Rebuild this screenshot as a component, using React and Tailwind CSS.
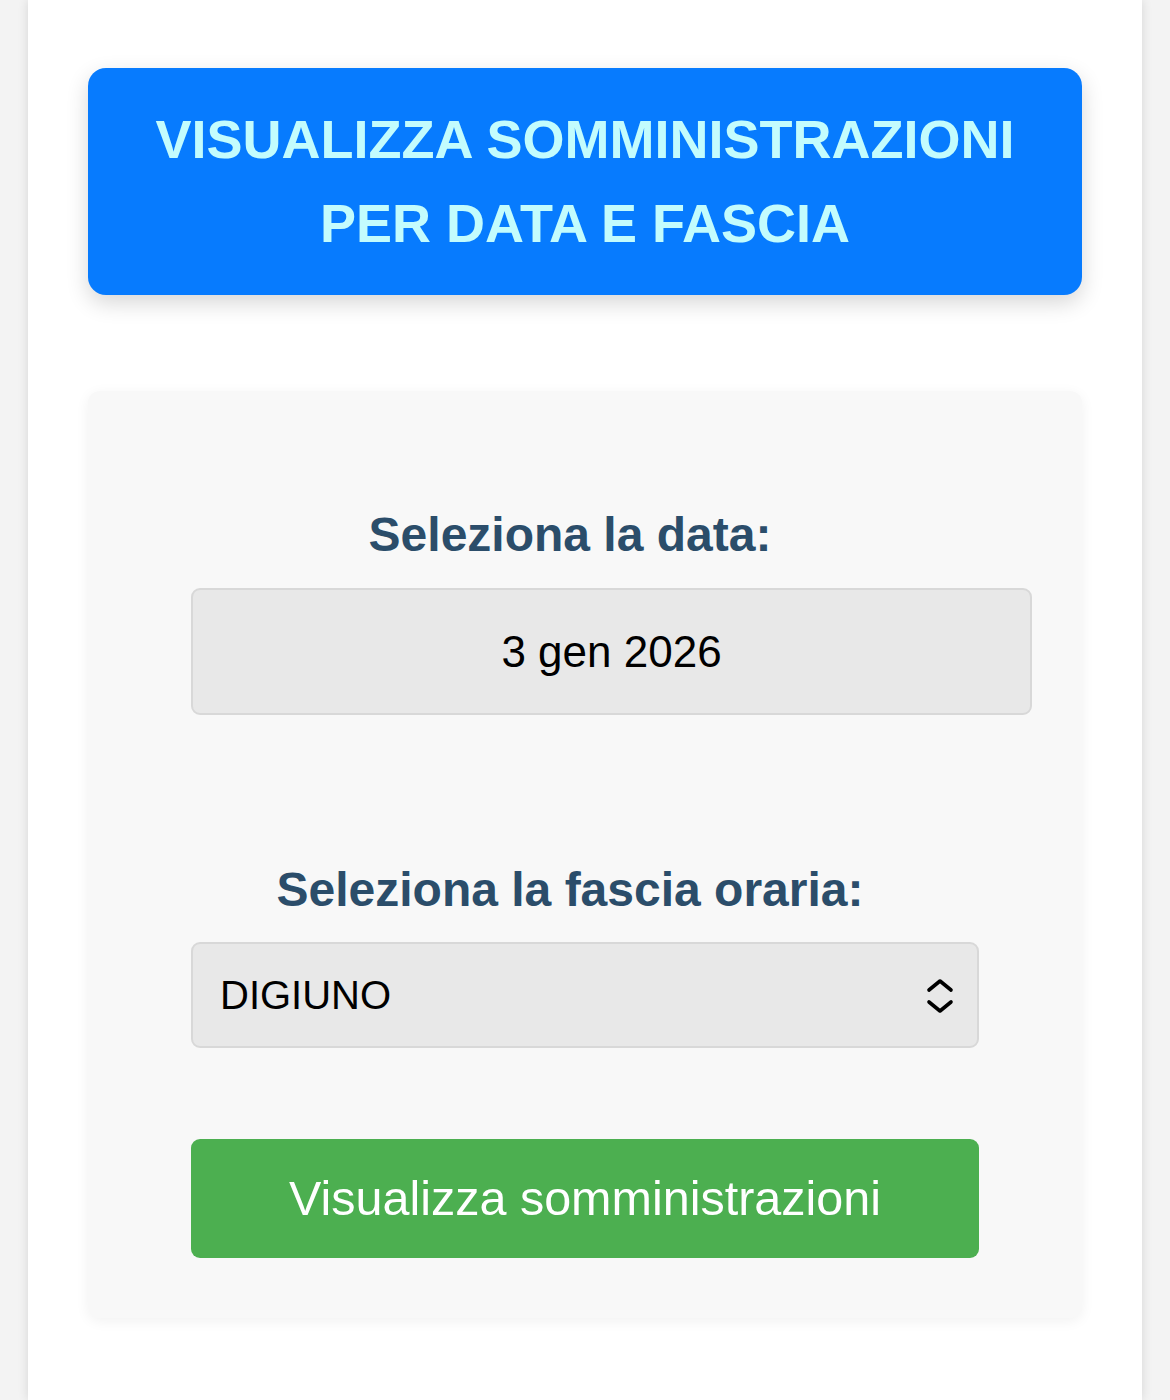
import React, { useState } from "react";

const ChevronUpDown = () => (
  <svg
    width="28"
    height="36"
    viewBox="0 0 28 36"
    fill="none"
    stroke="#000"
    strokeWidth="3.6"
    strokeLinecap="round"
    strokeLinejoin="round"
  >
    <path d="M3 12 L14 3 L25 12" />
    <path d="M3 24 L14 33 L25 24" />
  </svg>
);

const App = () => {
  const [date, setDate] = useState("3 gen 2026");
  const [fascia, setFascia] = useState("DIGIUNO");

  return (
    <div
      className="min-h-[1400px] bg-[#f3f3f3] px-[28px]"
      style={{ fontFamily: '"Liberation Sans", Arial, sans-serif' }}
    >
      <div className="min-h-[1400px] bg-white px-[60px] pt-[68px] pb-[82px] shadow-[0_0_10px_rgba(0,0,0,0.12)]">
        {/* Titolo */}
        <div className="rounded-[18px] bg-[#077bfe] pt-[29px] pb-[30px] text-center shadow-[0_8px_22px_rgba(0,0,0,0.16)]">
          <h1 className="text-[54px] font-bold uppercase leading-[84px] text-[#c3fcfd]">
            Visualizza somministrazioni
            <br />
            per data e fascia
          </h1>
        </div>

        {/* Form */}
        <div className="mt-[96px] rounded-[12px] bg-[#f8f8f8] px-[103px] pt-[116px] pb-[60px] shadow-[0_3px_14px_rgba(0,0,0,0.06)]">
          <label className="block pr-[30px] text-center text-[48px] font-bold leading-[55px] text-[#2b4d6a]">
            Seleziona la data:
          </label>
          <input
            type="text"
            readOnly
            value={date}
            onChange={(e) => setDate(e.target.value)}
            className="mt-[26px] block h-[127px] w-[841px] rounded-[9px] border-2 border-[#d8d8d8] bg-[#e8e8e8] text-center text-[44px] text-black outline-none"
          />

          <label className="mt-[147px] block pr-[30px] text-center text-[48px] font-bold leading-[55px] text-[#2b4d6a]">
            Seleziona la fascia oraria:
          </label>
          <div className="relative mt-[25px]">
            <select
              value={fascia}
              onChange={(e) => setFascia(e.target.value)}
              className="block h-[106px] w-full appearance-none rounded-[9px] border-2 border-[#d8d8d8] bg-[#e8e8e8] pl-[27px] text-[40px] text-black outline-none"
            >
              <option value="DIGIUNO">DIGIUNO</option>
              <option value="COLAZIONE">COLAZIONE</option>
              <option value="PRANZO">PRANZO</option>
              <option value="CENA">CENA</option>
            </select>
            <div className="pointer-events-none absolute right-[25px] top-[36px]">
              <ChevronUpDown />
            </div>
          </div>

          <button className="mt-[91px] block h-[119px] w-full rounded-[9px] bg-[#4caf50] text-[48.5px] text-white">
            Visualizza somministrazioni
          </button>
        </div>
      </div>
    </div>
  );
};

export default App;
